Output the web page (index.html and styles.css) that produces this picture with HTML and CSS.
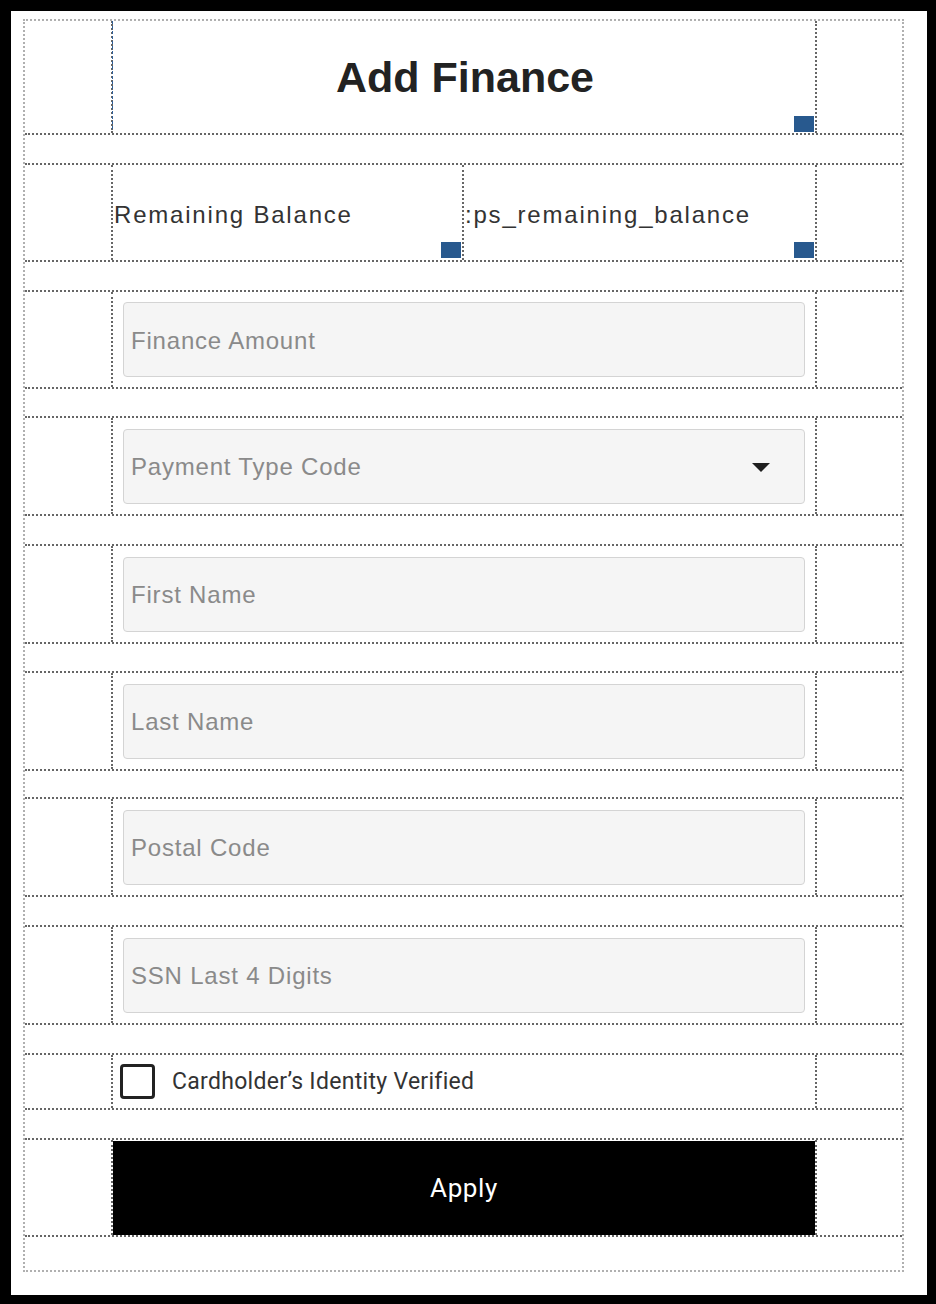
FILE: index.html
```html
<!DOCTYPE html>
<html lang="en">
<head>
<meta charset="utf-8">
<title>Add Finance</title>
<link rel="stylesheet" href="styles.css">
</head>
<body>
<div class="frame">
  <form class="sheet">
    <div class="row h-title">
      <div class="side"></div>
      <div class="cell cell-title selected">
        <h1 class="title">Add Finance</h1>
        <span class="handle"></span>
      </div>
      <div class="side"></div>
    </div>
    <div class="spacer h-sp28"></div>

    <div class="row h-95">
      <div class="side"></div>
      <div class="cell cell-split">
        <div class="half half-label">Remaining Balance<span class="handle"></span></div>
        <div class="half half-value">:ps_remaining_balance<span class="handle"></span></div>
      </div>
      <div class="side"></div>
    </div>
    <div class="spacer h-sp28"></div>

    <div class="row h-95">
      <div class="side"></div>
      <div class="cell"><input class="field" type="text" placeholder="Finance Amount"></div>
      <div class="side"></div>
    </div>
    <div class="spacer h-sp27"></div>

    <div class="row h-96">
      <div class="side"></div>
      <div class="cell">
        <div class="select-wrap">
          <div class="field field-select">Payment Type Code</div>
          <svg class="caret" width="18" height="9" viewBox="0 0 18 9"><path d="M0 0H18L9 9Z" fill="#1e1e1e"/></svg>
        </div>
      </div>
      <div class="side"></div>
    </div>
    <div class="spacer h-sp28"></div>

    <div class="row h-96">
      <div class="side"></div>
      <div class="cell"><input class="field" type="text" placeholder="First Name"></div>
      <div class="side"></div>
    </div>
    <div class="spacer h-sp27"></div>

    <div class="row h-96">
      <div class="side"></div>
      <div class="cell"><input class="field" type="text" placeholder="Last Name"></div>
      <div class="side"></div>
    </div>
    <div class="spacer h-sp26"></div>

    <div class="row h-96">
      <div class="side"></div>
      <div class="cell"><input class="field" type="text" placeholder="Postal Code"></div>
      <div class="side"></div>
    </div>
    <div class="spacer h-sp28"></div>

    <div class="row h-96">
      <div class="side"></div>
      <div class="cell"><input class="field" type="text" placeholder="SSN Last 4 Digits"></div>
      <div class="side"></div>
    </div>
    <div class="spacer h-sp28"></div>

    <div class="row h-check">
      <div class="side"></div>
      <div class="cell cell-check">
        <span class="checkbox"></span>
        <span class="check-label">Cardholder’s Identity Verified</span>
      </div>
      <div class="side"></div>
    </div>
    <div class="spacer h-sp28"></div>

    <div class="row h-95">
      <div class="side"></div>
      <div class="cell cell-button"><button class="apply" type="button">Apply</button></div>
      <div class="side"></div>
    </div>
    <div class="spacer spacer-last"></div>
  </form>
</div>
</body>
</html>
```

FILE: styles.css
```css
html, body {
  margin: 0;
  padding: 0;
  background: #000;
}

.frame {
  background: #fff;
  margin: 11px 9px 0 11px;
  height: 1284px;
  padding: 8px 23px 0 12px;
  box-sizing: border-box;
}

.sheet {
  display: flex;
  flex-direction: column;
  border: 2px dotted #b0b0b0;
  margin: 0;
}

.row {
  display: grid;
  grid-template-columns: 86px 706px 1fr;
  border-bottom: 2px dotted #666;
  box-sizing: content-box;
}

.spacer {
  border-bottom: 2px dotted #666;
  box-sizing: content-box;
}

.spacer-last {
  height: 33px;
  border-bottom: none;
}

.h-title { height: 112px; }
.h-95 { height: 95px; }
.h-96 { height: 96px; }
.h-check { height: 53px; }
.h-sp28 { height: 28px; }
.h-sp27 { height: 27px; }
.h-sp26 { height: 26px; }

.cell {
  position: relative;
  display: flex;
  align-items: center;
  padding: 0 10px;
  border-left: 2px dotted #666;
  border-right: 2px dotted #666;
  min-width: 0;
}

.cell-title {
  justify-content: center;
  padding: 0;
}

.selected::before {
  content: "";
  position: absolute;
  left: -1px;
  top: 0;
  bottom: 4px;
  border-left: 1px dashed #2f5f98;
}

.title {
  margin: 0 0 0 2px;
  font-family: "Liberation Sans", Arial, sans-serif;
  font-weight: bold;
  font-size: 43px;
  color: #222;
  line-height: 1;
}

.handle {
  position: absolute;
  right: 1px;
  bottom: 1px;
  width: 20px;
  height: 16px;
  background: #28598e;
}

.cell-split {
  padding: 0;
  align-items: stretch;
}

.half {
  position: relative;
  display: flex;
  align-items: center;
  padding-top: 4px;
  font-family: "Liberation Sans", Arial, sans-serif;
  font-size: 24px;
  letter-spacing: 1.8px;
  color: #333;
}

.half-label {
  width: 351px;
  padding-left: 1px;
  box-sizing: border-box;
  border-right: 2px dotted #666;
}

.half-label .handle {
  bottom: 2px;
}

.half-value {
  flex: 1;
  padding-left: 1px;
}

.half-value .handle {
  bottom: 2px;
}

.field {
  width: 100%;
  height: 75px;
  box-sizing: border-box;
  border: 1px solid #d4d4d4;
  border-radius: 4px;
  background: #f5f5f5;
  padding: 2px 8px 0 7px;
  font-family: "Liberation Sans", Arial, sans-serif;
  font-size: 24px;
  letter-spacing: 0.8px;
  color: #333;
  outline: none;
  margin: 0;
}

.field::placeholder {
  color: #8a8a8a;
  opacity: 1;
}

.select-wrap {
  position: relative;
  width: 100%;
}

.field-select {
  display: flex;
  align-items: center;
  color: #8a8a8a;
}

.caret {
  position: absolute;
  right: 35px;
  top: 34px;
  display: block;
}

.cell-check {
  padding-left: 7px;
}

.checkbox {
  width: 35px;
  height: 35px;
  box-sizing: border-box;
  border: 3px solid #222;
  border-radius: 4px;
  flex: none;
}

.check-label {
  margin-left: 17px;
  font-family: Roboto, "Liberation Sans", sans-serif;
  font-size: 23px;
  letter-spacing: 0.3px;
  color: #333;
}

.cell-button {
  padding: 0;
  align-items: stretch;
}

.apply {
  flex: 1;
  margin: 1px 0 0 0;
  border: none;
  background: #000;
  color: #fff;
  font-family: Roboto, "Liberation Sans", sans-serif;
  font-size: 26px;
  letter-spacing: 0.6px;
  cursor: pointer;
}
```
